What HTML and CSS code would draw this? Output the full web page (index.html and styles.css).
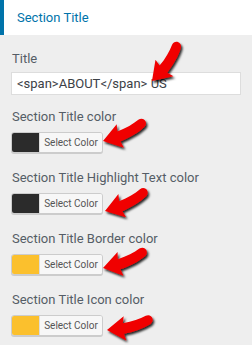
FILE: index.html
```html
<!DOCTYPE html>
<html>
<head>
<meta charset="utf-8">
<link rel="stylesheet" href="styles.css">
</head>
<body>
<div class="panel">
  <div class="header"><h3 class="header-title">Section Title</h3></div>
  <div class="controls">
    <div class="control control-text">
      <label class="label">Title</label>
      <div class="input">&lt;span&gt;ABOUT&lt;/span&gt; US</div>
    </div>
    <div class="control">
      <label class="label">Section Title color</label>
      <div class="color-btn"><span class="swatch dark"></span><span class="btn-text">Select Color</span></div>
    </div>
    <div class="control">
      <label class="label">Section Title Highlight Text color</label>
      <div class="color-btn"><span class="swatch dark"></span><span class="btn-text">Select Color</span></div>
    </div>
    <div class="control">
      <label class="label">Section Title Border color</label>
      <div class="color-btn"><span class="swatch yellow"></span><span class="btn-text">Select Color</span></div>
    </div>
    <div class="control">
      <label class="label">Section Title Icon color</label>
      <div class="color-btn"><span class="swatch yellow"></span><span class="btn-text">Select Color</span></div>
    </div>
  </div>
  <svg class="arrows" width="252" height="345" viewBox="0 0 252 345">
    <defs>
      <filter id="sh" x="-30%" y="-30%" width="160%" height="160%">
        <feDropShadow dx="1.5" dy="2" stdDeviation="1.2" flood-color="#000" flood-opacity="0.85"/>
      </filter>
      <path id="arr" d="M0 0 L18 -12 L16.5 -5 C26 -5.5 34 -7.5 40 -10 C46 -12 49 -4.5 44 -1.5 C36 2.5 26 4.5 16.5 5.5 L18 12.5 Z"/>
    </defs>
    <g fill="#f00000" filter="url(#sh)">
      <use href="#arr" transform="translate(152 81) rotate(-47)"/>
      <use href="#arr" transform="translate(103 141) rotate(-17)"/>
      <use href="#arr" transform="translate(105 211) rotate(-18)"/>
      <use href="#arr" transform="translate(103 268) rotate(-14)"/>
      <use href="#arr" transform="translate(107 330) rotate(-6)"/>
    </g>
  </svg>
</div>
</body>
</html>
```
FILE: styles.css
```css
html, body {
  margin: 0;
  padding: 0;
  background: #eeeeee;
  font-family: Roboto, "Open Sans", sans-serif;
}
.panel {
  position: relative;
  width: 252px;
  height: 345px;
  overflow: hidden;
}
.header {
  background: #fff;
  border-left: 4px solid #0073aa;
  height: 35px;
  box-sizing: border-box;
  display: flex;
  align-items: center;
  padding-left: 13px;
}
.header-title {
  margin: 0;
  font-size: 13px;
  font-weight: 400;
  color: #0073aa;
  line-height: 20px;
}
.controls {
  display: flex;
  flex-direction: column;
  padding: 14px 11px 0 11px;
}
.control {
  display: flex;
  flex-direction: column;
  align-items: flex-start;
  margin-bottom: 15px;
}
.control-text {
  margin-bottom: 12px;
}
.label {
  display: block;
  font-size: 13px;
  line-height: 20px;
  color: #555d66;
  margin-left: 1px;
  margin-bottom: 5px;
}
.control-text .label {
  margin-bottom: 3px;
}
.input {
  box-sizing: border-box;
  width: 230px;
  height: 23px;
  background: #fff;
  border: 1px solid #dddddd;
  padding-left: 5px;
  font-size: 13px;
  line-height: 21px;
  color: #3c4146;
}
.color-btn {
  display: flex;
  box-sizing: border-box;
  height: 21px;
  width: 92px;
  border: 1px solid #cccccc;
  border-radius: 3px;
  box-shadow: 0 1px 0 #cccccc;
  overflow: hidden;
  background: #f7f7f7;
}
.swatch {
  width: 27px;
  flex: none;
}
.swatch.dark { background: #2b2b2b; }
.swatch.yellow { background: #fbc02d; }
.btn-text {
  flex: 1;
  border-left: 1px solid #dddddd;
  background: #f7f7f7;
  font-size: 10px;
  line-height: 19px;
  color: #555555;
  text-align: center;
}
.arrows {
  position: absolute;
  left: 0;
  top: 0;
  pointer-events: none;
}
```
